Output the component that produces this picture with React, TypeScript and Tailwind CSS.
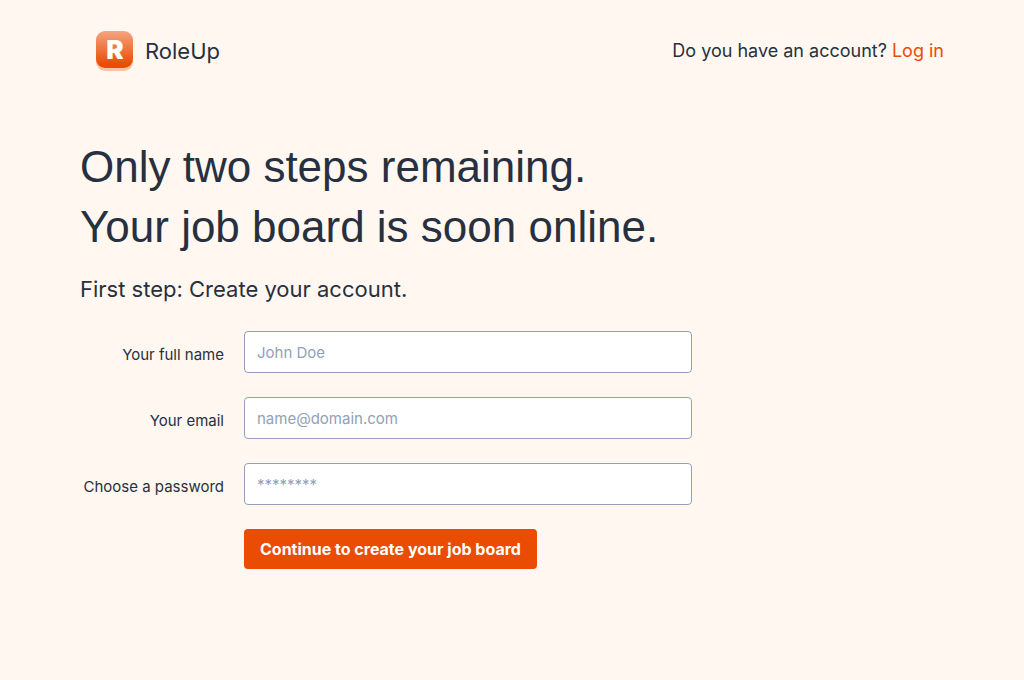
import React from "react";

function Logo() {
  return (
    <svg width="37" height="40" viewBox="0 0 37 40" className="shrink-0" aria-hidden="true">
      <defs>
        <linearGradient id="face" x1="0" y1="0" x2="0" y2="1">
          <stop offset="0" stopColor="#f5a582" />
          <stop offset="0.9" stopColor="#ea4c03" />
          <stop offset="1" stopColor="#ea4c03" />
        </linearGradient>
      </defs>
      <rect x="0" y="3" width="37" height="37" rx="9" fill="#f8c3a5" />
      <rect x="0" y="0" width="37" height="37" rx="9" fill="url(#face)" />
      <text x="19" y="28" textAnchor="middle" fontFamily="Inter" fontWeight="900" fontSize="26" fill="#fff">R</text>
    </svg>
  );
}

type FieldProps = { id: string; label: string; type: string; placeholder: string };

function Field({ id, label, type, placeholder }: FieldProps) {
  return (
    <div className="flex items-center gap-5">
      <label htmlFor={id} className="w-36 shrink-0 pt-1.5 text-right text-[15px] leading-6">{label}</label>
      <input
        id={id}
        type={type}
        placeholder={placeholder}
        className="h-[42px] w-full max-w-md rounded border border-slate-400 bg-white px-3 text-[15px] placeholder:text-slate-400"
      />
    </div>
  );
}

export default function App() {
  return (
    <div className="min-h-screen bg-[#fff7f0] px-20 font-['Inter',sans-serif] text-[#27303f]">
      <header className="flex items-center justify-between pt-[31px] pl-4">
        <a href="#" className="flex items-center gap-3 text-[22px]">
          <Logo />
          RoleUp
        </a>
        <p className="text-lg">
          Do you have an account? <a href="#" className="text-[#ea4c03]">Log in</a>
        </p>
      </header>
      <main className="pt-[66px]">
        <h1 className="font-['Liberation_Sans',sans-serif] text-[44px] leading-[60px]">
          Only two steps remaining.<br />Your job board is soon online.
        </h1>
        <h2 className="pt-[18px] text-[22px] leading-7">First step: Create your account.</h2>
        <form className="flex flex-col gap-6 pt-7">
          <Field id="name" label="Your full name" type="text" placeholder="John Doe" />
          <Field id="email" label="Your email" type="email" placeholder="name@domain.com" />
          <Field id="password" label="Choose a password" type="password" placeholder="********" />
          <button type="submit" className="ml-[164px] h-10 self-start rounded bg-[#ea4c03] px-4 text-base font-bold text-white">
            Continue to create your job board
          </button>
        </form>
      </main>
    </div>
  );
}
